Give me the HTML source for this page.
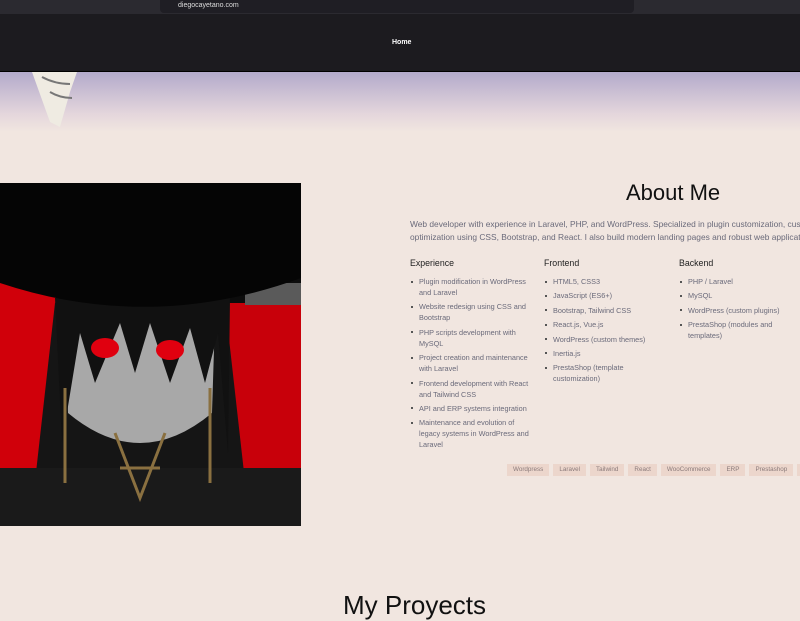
<!DOCTYPE html>
<html><head><meta charset="utf-8"><style>
*{margin:0;padding:0;box-sizing:border-box}
body{width:800px;height:600px;overflow:hidden;background:#f1e6e0;font-family:"Liberation Sans",sans-serif;position:relative}
.chrome{position:absolute;top:0;left:0;width:800px;height:14px;background:#2b2a30}
.url{position:absolute;left:160px;top:0;width:474px;height:13px;background:#1f1e24;border-radius:0 0 4px 4px;color:#ddd;font-size:7px;line-height:12px;padding-left:18px}
.nav{position:absolute;top:14px;left:0;width:800px;height:58px;background:#1c1b1f;border-bottom:1px solid #000}
.nav span{position:absolute;left:392px;top:25px;color:#fff;font-size:7px;font-weight:bold}
.grad{position:absolute;top:72px;left:0;width:800px;height:60px;background:linear-gradient(#b3aacb,#e4d6dc 70%,#f1e6e0)}
h1{position:absolute;left:626px;top:180px;font-weight:normal;font-size:22px;color:#111}
.p{position:absolute;left:410px;top:218px;width:400px;white-space:nowrap;font-size:8.4px;line-height:13px;color:#6a6a7a}
.col{position:absolute;top:258px;font-size:7.3px;color:#6a6a7a}
.col h3{font-size:8.8px;font-weight:normal;color:#222;margin-bottom:8px}
.col ul{list-style:none}
.col li{position:relative;padding-left:9px;line-height:11px;margin-bottom:3.4px}
.col li:before{content:"";position:absolute;left:1px;top:4.5px;width:2px;height:2px;background:#555}
.tags{position:absolute;left:507px;top:464px;white-space:nowrap;font-size:0}
.tags span{display:inline-block;background:#ecd6cc;color:#8a7a7a;font-size:6.3px;line-height:12px;padding:0 6px;margin-right:4px;height:12px}
.h2{position:absolute;left:343px;top:590px;font-size:26px;color:#111}
</style></head><body>
<div class="chrome"><div class="url">diegocayetano.com</div></div>
<div class="nav"><span>Home</span></div>
<div class="grad"></div>
<svg style="position:absolute;left:20px;top:72px" width="60" height="60"><path d="M12 0 L57 0 L50 20 L40 55 L30 50 Z" fill="#efebe2"/><path d="M22 5 Q35 12 50 12 M30 20 Q40 26 52 26" stroke="#777" stroke-width="2" fill="none"/></svg>
<svg style="position:absolute;left:0;top:183px" width="301" height="343" viewBox="0 0 301 343">
<rect width="301" height="343" fill="#0c0c0c"/>
<rect x="0" y="95" width="60" height="210" fill="#d0000a"/>
<rect x="215" y="120" width="86" height="200" fill="#c8000a"/>
<rect x="245" y="100" width="56" height="22" fill="#5a5a5a"/>
<path d="M30 343 L55 120 Q140 60 225 120 L250 343 Z" fill="#151515"/>
<path d="M65 130 Q140 105 215 135 L212 230 Q140 290 68 230 Z" fill="#a8a8a8"/>
<path d="M55 115 L62 260 L80 150 L95 200 L120 140 L135 190 L150 140 L170 200 L190 145 L205 200 L218 150 L228 270 L230 115 Z" fill="#111"/>
<ellipse cx="105" cy="165" rx="14" ry="10" fill="#e0000f"/><ellipse cx="170" cy="167" rx="14" ry="10" fill="#e0000f"/>
<path d="M0 0 H301 V95 Q150 150 0 100 Z" fill="#050505"/>
<path d="M0 285 H301 V343 H0 Z" fill="#1a1a1a"/>
<path d="M115 250 L140 315 L165 250 M120 285 L160 285 M65 205 V300 M210 205 V300" stroke="#8a7040" stroke-width="3" fill="none"/>
</svg>
<h1>About Me</h1>
<div class="p">Web developer with experience in Laravel, PHP, and WordPress. Specialized in plugin customization, custom<br>optimization using CSS, Bootstrap, and React. I also build modern landing pages and robust web applications</div>
<div class="col" style="left:410px;width:120px"><h3>Experience</h3><ul>
<li>Plugin modification in WordPress and Laravel</li><li>Website redesign using CSS and Bootstrap</li><li>PHP scripts development with MySQL</li><li>Project creation and maintenance with Laravel</li><li>Frontend development with React and Tailwind CSS</li><li>API and ERP systems integration</li><li>Maintenance and evolution of legacy systems in WordPress and Laravel</li></ul></div>
<div class="col" style="left:544px;width:108px"><h3>Frontend</h3><ul>
<li>HTML5, CSS3</li><li>JavaScript (ES6+)</li><li>Bootstrap, Tailwind CSS</li><li>React.js, Vue.js</li><li>WordPress (custom themes)</li><li>Inertia.js</li><li>PrestaShop (template customization)</li></ul></div>
<div class="col" style="left:679px;width:108px"><h3>Backend</h3><ul>
<li>PHP / Laravel</li><li>MySQL</li><li>WordPress (custom plugins)</li><li>PrestaShop (modules and templates)</li></ul></div>
<div class="tags"><span>Wordpress</span><span>Laravel</span><span>Tailwind</span><span>React</span><span>WooCommerce</span><span>ERP</span><span>Prestashop</span><span>PHP</span></div>
<div class="h2">My Proyects</div>
</body></html>
